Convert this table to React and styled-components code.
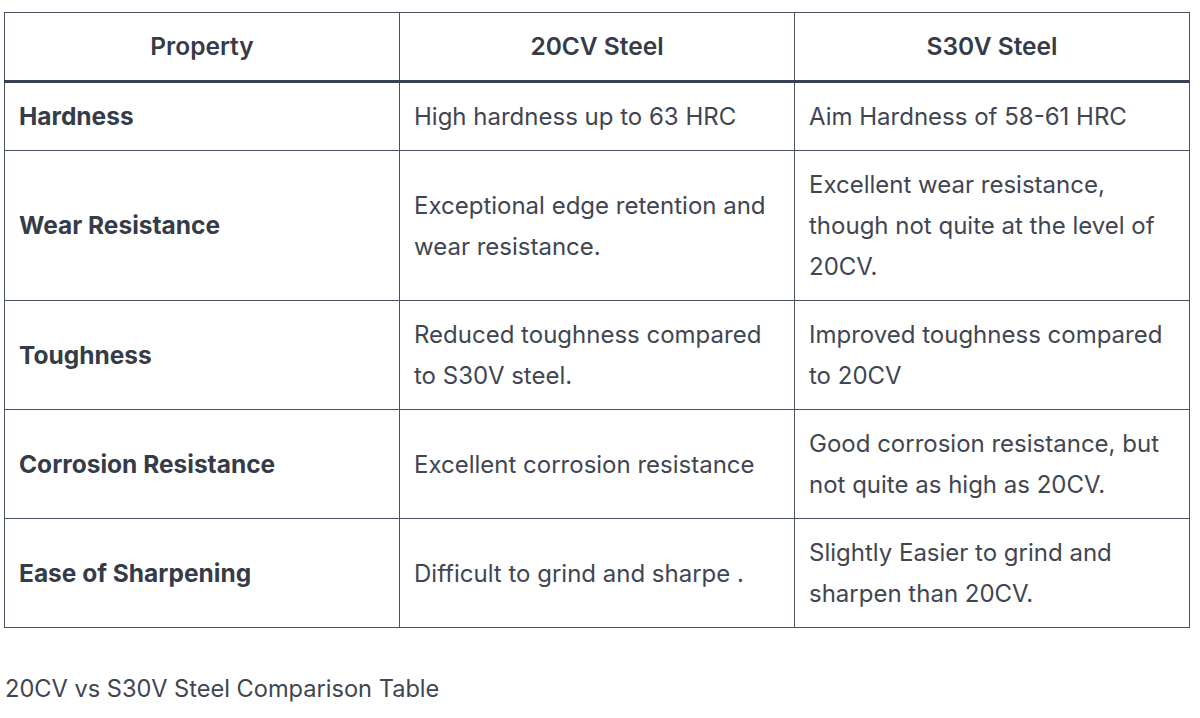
import React from "react";
import styled, { createGlobalStyle } from "styled-components";

const GlobalStyle = createGlobalStyle`
  html, body {
    margin: 0;
    padding: 0;
    background: #fff;
  }
  body {
    font-family: Inter, "Noto Sans", "Liberation Sans", sans-serif;
    color: #3a414d;
  }
`;

const Page = styled.div`
  padding: 12px 10px 0 4px;
`;

const Table = styled.table`
  width: 1186px;
  border-collapse: collapse;
  table-layout: fixed;
  font-size: 24px;
  line-height: 41px;
  border: 1px solid #4a5260;
`;

const HeadCell = styled.th`
  font-weight: 600;
  font-size: 24.5px;
  text-align: center;
  padding: 13px 14px;
  border: 1px solid #4a5260;
  border-bottom: 3px solid #374151;
  color: #353c48;
`;

const Cell = styled.td`
  padding: 13px 14px;
  border: 1px solid #4a5260;
  vertical-align: middle;
  font-weight: ${(p) => (p.$label ? 700 : 400)};
  font-size: ${(p) => (p.$label ? "24.5px" : "24px")};
  color: ${(p) => (p.$label ? "#353c48" : "#3f4652")};
`;

const Caption = styled.p`
  margin: 46px 0 0 1px;
  font-size: 23.6px;
  line-height: 30px;
  color: #3f4652;
`;

const rows = [
  ["Hardness", "High hardness up to 63 HRC", "Aim Hardness of 58-61 HRC"],
  [
    "Wear Resistance",
    "Exceptional edge retention and wear resistance.",
    "Excellent wear resistance, though not quite at the level of 20CV.",
  ],
  [
    "Toughness",
    "Reduced toughness compared to S30V steel.",
    "Improved toughness compared to 20CV",
  ],
  [
    "Corrosion Resistance",
    "Excellent corrosion resistance",
    "Good corrosion resistance, but not quite as high as 20CV.",
  ],
  [
    "Ease of Sharpening",
    "Difficult to grind and sharpe .",
    "Slightly Easier to grind and sharpen than 20CV.",
  ],
];

export default function App() {
  return (
    <>
      <GlobalStyle />
      <Page>
        <Table>
          <thead>
            <tr>
              <HeadCell>Property</HeadCell>
              <HeadCell>20CV Steel</HeadCell>
              <HeadCell>S30V Steel</HeadCell>
            </tr>
          </thead>
          <tbody>
            {rows.map((r) => (
              <tr key={r[0]}>
                <Cell $label>{r[0]}</Cell>
                <Cell>{r[1]}</Cell>
                <Cell>{r[2]}</Cell>
              </tr>
            ))}
          </tbody>
        </Table>
        <Caption>20CV vs S30V Steel Comparison Table</Caption>
      </Page>
    </>
  );
}
